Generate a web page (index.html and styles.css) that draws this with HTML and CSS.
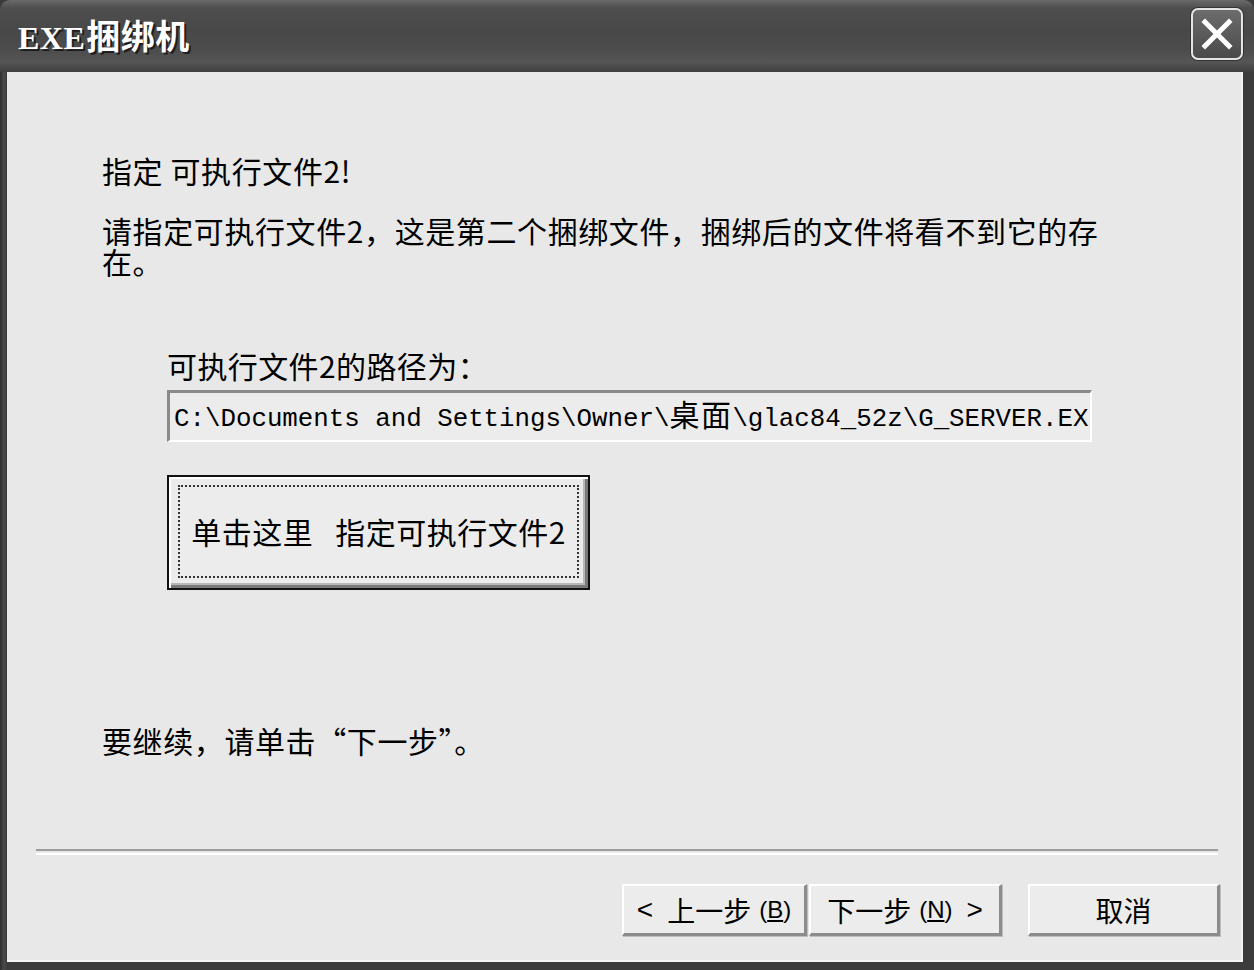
FILE: index.html
```html
<!DOCTYPE html>
<html lang="zh-CN">
<head>
<meta charset="utf-8">
<title>EXE捆绑机</title>
<link rel="stylesheet" href="styles.css">
</head>
<body>
<div class="window">
  <div class="titlebar">
    <div class="title"><span class="latin">EXE</span>捆绑机</div>
    <div class="close-btn">
      <svg width="34" height="34" viewBox="0 0 34 34"><path d="M5 5 L29 29 M29 5 L5 29" stroke="#ffffff" stroke-width="5" stroke-linecap="square"/></svg>
    </div>
  </div>
  <div class="client">
    <div class="content">
      <div class="heading">指定 可执行文件2!</div>
      <p class="desc">请指定可执行文件2，这是第二个捆绑文件，捆绑后的文件将看不到它的存在。</p>
      <div class="path-block">
        <div class="label">可执行文件2的路径为：</div>
        <div class="path-input"><span class="path-text">C:\Documents and Settings\Owner\<span class="cjk">桌面</span>\glac84_52z\G_SERVER.EXE</span></div>
        <div class="big-btn"><div class="focus">单击这里<span class="gap"></span>指定可执行文件2</div></div>
      </div>
      <div class="continue">要继续，请单击“下一步”。</div>
    </div>
    <div class="separator"></div>
    <div class="footer">
      <div class="btn btn-back"><span class="arrow">&lt;</span>上一步<span class="mn">(<u>B</u>)</span></div>
      <div class="btn btn-next">下一步<span class="mn">(<u>N</u>)</span><span class="arrow arrow-r">&gt;</span></div>
      <div class="btn btn-cancel">取消</div>
    </div>
  </div>
</div>
</body>
</html>
```
FILE: styles.css
```css
html, body {
  margin: 0;
  padding: 0;
  background: #3a3a3a;
}
.window {
  width: 1254px;
  height: 970px;
  display: flex;
  flex-direction: column;
  background: linear-gradient(to right, #2e2e2e 0, #4a4a4a 4px, #3c3c3c 7px);
  border-radius: 10px 10px 0 0;
  overflow: hidden;
  box-sizing: border-box;
}
.titlebar {
  height: 72px;
  flex: none;
  display: flex;
  align-items: center;
  justify-content: space-between;
  padding: 0 11px 4px 18px;
  box-sizing: border-box;
  background: linear-gradient(to bottom, #6a6a6a 0, #4e4e4e 8px, #484848 30px, #4c4c4c 50px, #565656 62px, #3e3e3e 72px);
}
.title {
  font-family: "Noto Sans CJK SC", "Liberation Serif", serif;
  font-weight: 700;
  font-size: 34px;
  color: #ffffff;
  text-shadow: 2px 2px 0 #1e1e1e;
  letter-spacing: 0.5px;
  display: flex;
  align-items: baseline;
}
.latin {
  font-family: "Liberation Serif", serif;
  font-weight: 700;
  font-size: 32px;
  letter-spacing: 0.5px;
  margin-right: 1px;
}
.close-btn {
  width: 52px;
  height: 52px;
  box-sizing: border-box;
  border: 2px solid #e4e4e4;
  border-radius: 7px;
  background: linear-gradient(to bottom, #6c6c6c, #4a4a4a);
  display: flex;
  align-items: center;
  justify-content: center;
  box-shadow: 0 0 0 1px #333;
}
.client {
  flex: 1;
  margin: 0 11px 8px 7px;
  background: #e8e8e8;
  display: flex;
  flex-direction: column;
  font-family: "Noto Sans CJK SC", "Liberation Sans", sans-serif;
  color: #000;
  border-right: 2px solid #f4f4f4;
  border-bottom: 2px solid #f4f4f4;
}
.content {
  padding: 83px 0 0 95px;
  flex: 1;
}
.heading {
  font-size: 30px;
  line-height: 31px;
  letter-spacing: 0.6px;
}
.desc {
  margin: 29px 0 0 0;
  width: 1010px;
  font-size: 30px;
  line-height: 31px;
  letter-spacing: 0.6px;
}
.path-block {
  padding-left: 65px;
  margin-top: 73px;
}
.label {
  font-size: 30px;
  line-height: 31px;
  letter-spacing: 0.4px;
}
.path-input {
  margin-top: 9px;
  width: 925px;
  height: 52px;
  box-sizing: border-box;
  border-top: 3px solid #8a8a8a;
  border-left: 3px solid #8a8a8a;
  border-right: 2px solid #ffffff;
  border-bottom: 2px solid #ffffff;
  background: #ececec;
  overflow: hidden;
  white-space: nowrap;
  display: flex;
  align-items: center;
  padding-left: 4px;
}
.path-text {
  font-family: "Liberation Mono", "Noto Sans CJK SC", monospace;
  font-size: 25.8px;
  line-height: 30px;
}
.cjk {
  font-family: "Noto Sans CJK SC", sans-serif;
  font-size: 30px;
  letter-spacing: 1.5px;
}
.big-btn {
  margin-top: 33px;
  width: 423px;
  height: 115px;
  box-sizing: border-box;
  border: 2px solid #111;
  background: #ececec;
  box-shadow: inset 2px 2px 0 #ffffff, inset -3px -3px 0 #7a7a7a, inset -5px -5px 0 #b8b8b8;
  padding: 8px 9px 10px 9px;
  display: flex;
}
.focus {
  flex: 1;
  border: 2px dotted #333;
  display: flex;
  align-items: center;
  justify-content: center;
  font-size: 30px;
  letter-spacing: 0.5px;
  padding-bottom: 2px;
}
.gap {
  display: inline-block;
  width: 22px;
}
.continue {
  margin-top: 135px;
  font-size: 30px;
  line-height: 31px;
  letter-spacing: 0.6px;
}
.separator {
  margin: 0 23px 0 29px;
  height: 2px;
  border-top: 2px solid #9c9c9c;
  border-bottom: 2px solid #ffffff;
  flex: none;
}
.footer {
  display: flex;
  justify-content: flex-end;
  padding: 29px 21px 24px 0;
  flex: none;
}
.btn {
  height: 52px;
  box-sizing: border-box;
  background: #ececec;
  display: flex;
  align-items: center;
  justify-content: center;
  font-size: 28px;
  border-top: 2px solid #ffffff;
  border-left: 2px solid #ffffff;
  border-right: 3px solid #8c8c8c;
  border-bottom: 3px solid #8c8c8c;
  box-shadow: 1px 1px 0 #bdbdbd;
}
.btn-back { width: 185px; }
.btn-next { width: 193px; margin-left: 2px; }
.btn-cancel { width: 192px; margin-left: 26px; }
.arrow {
  font-family: "Liberation Sans", sans-serif;
  font-size: 28px;
  margin-right: 14px;
}
.arrow-r {
  margin-right: 0;
  margin-left: 14px;
}
.mn {
  font-family: "Liberation Sans", sans-serif;
  font-size: 24px;
  margin-left: 8px;
}
```
